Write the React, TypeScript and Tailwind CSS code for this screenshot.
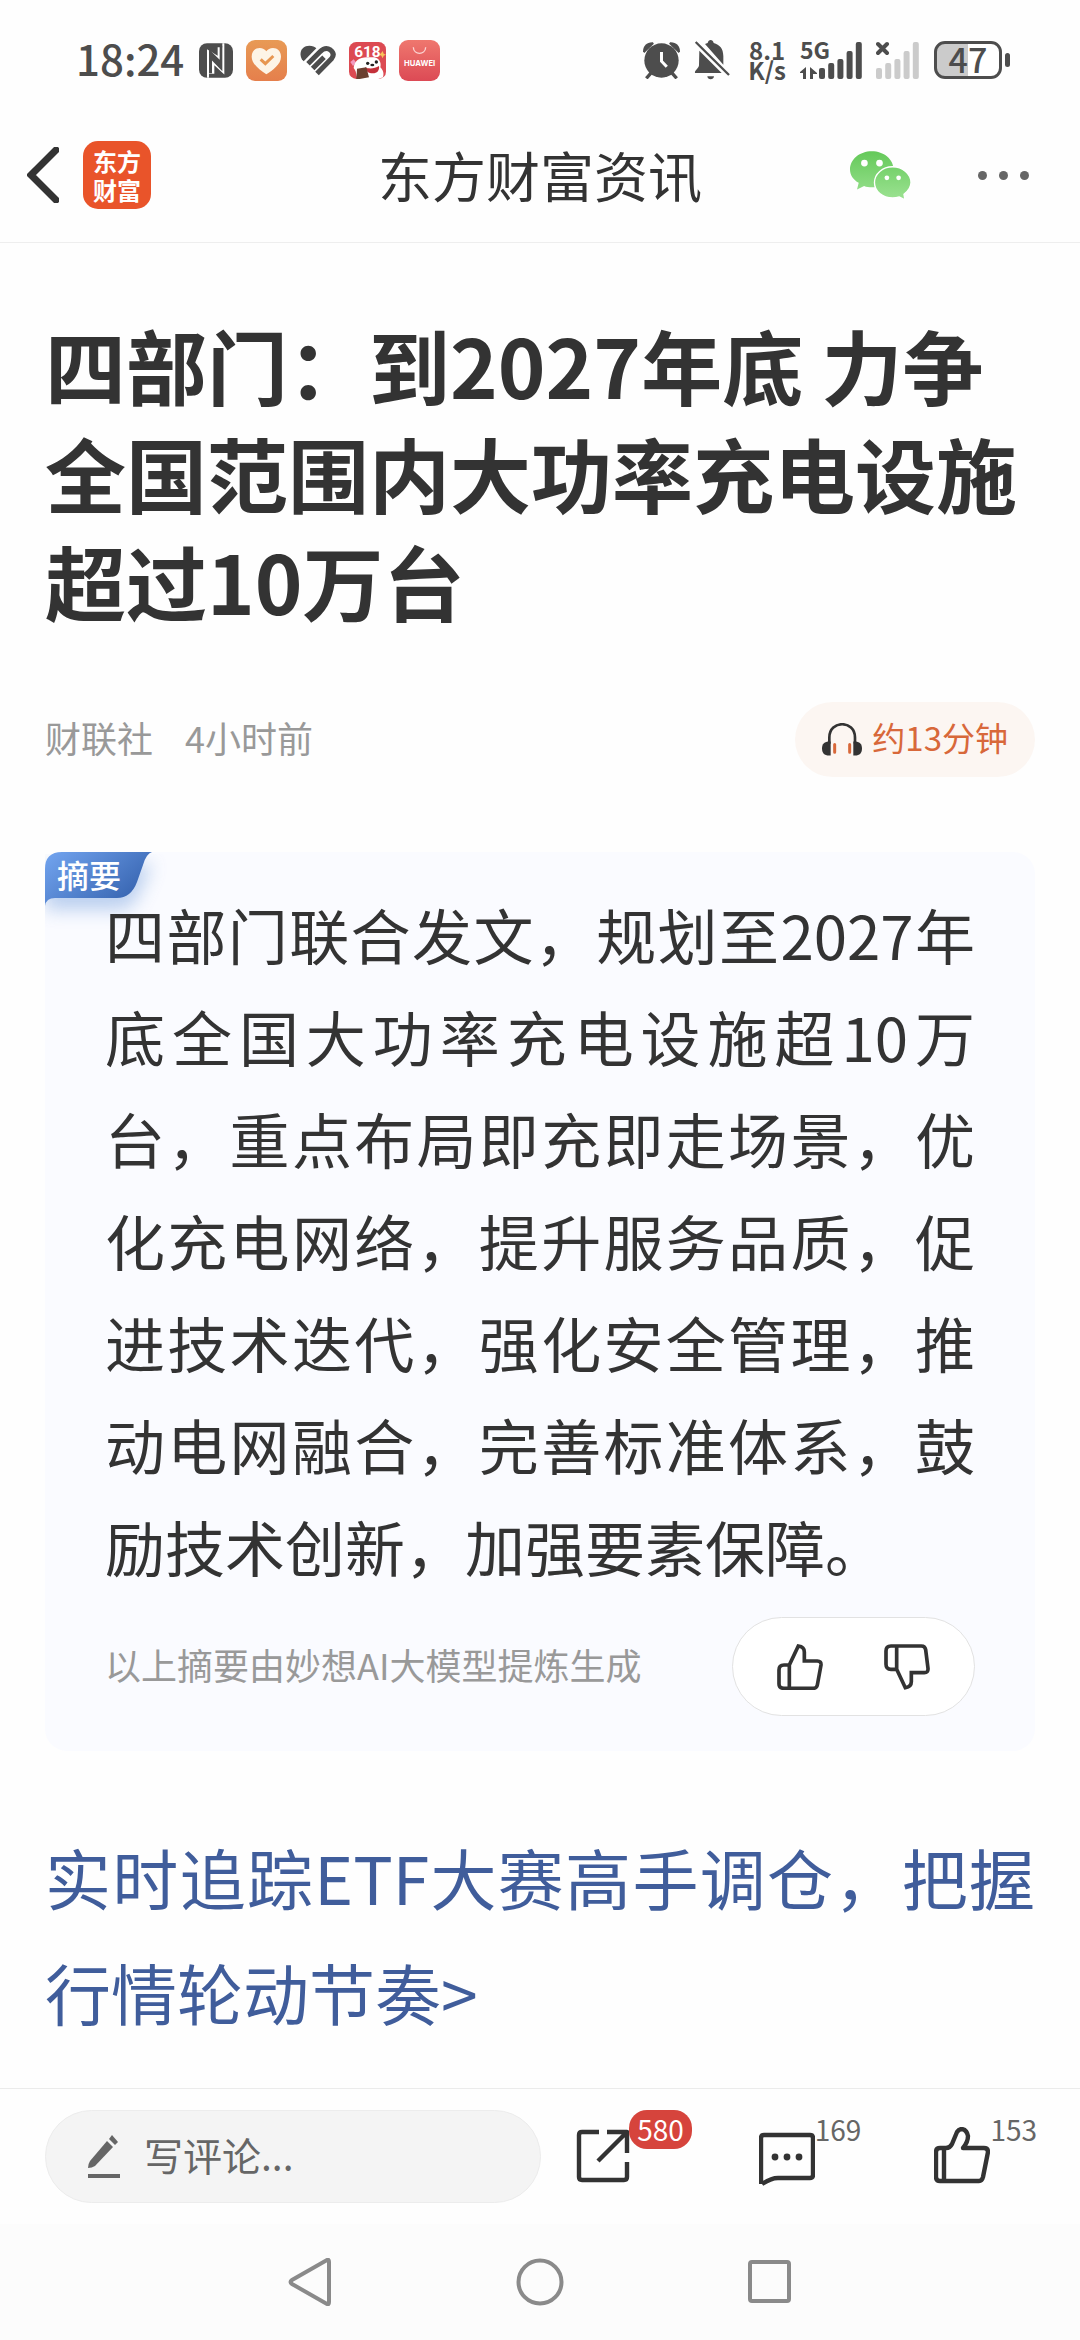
import { useState } from 'react';

import type { ReactNode } from 'react';

const SUMMARY =
	'四部门联合发文，规划至2027年底全国大功率充电设施超10万台，重点布局即充即走场景，优化充电网络，提升服务品质，促进技术迭代，强化安全管理，推动电网融合，完善标准体系，鼓励技术创新，加强要素保障。';

const SIGNAL_BARS = [11, 16, 20, 28, 37];

function NfcIcon() {
	return (
		<svg viewBox="0 0 102 104" className="h-[35px] w-[34px]" aria-hidden="true">
			<rect width="102" height="104" rx="24" fill="#4d4d4d" />
			<path d="M24 18V104H30V92H46V66L76 94V86V0H70V12H56V38Z" fill="#fff" />
			<path d="M30 98V16L71 88V6" fill="none" stroke="#4d4d4d" strokeWidth="0" />
			<path d="M30 34V90H39V52L70 84V10H62V50L30 18Z" fill="#4d4d4d" />
		</svg>
	);
}

function HeartAppIcon() {
	return (
		<svg viewBox="0 0 123 123" className="size-[41px]" aria-hidden="true">
			<defs>
				<linearGradient id="heart-app" x1="0" y1="0" x2="0" y2="1">
					<stop offset="0" stopColor="#e89a55" />
					<stop offset="1" stopColor="#e57f4c" />
				</linearGradient>
			</defs>
			<rect width="123" height="123" rx="27" fill="url(#heart-app)" />
			<path
				d="M61 103C42 90 17 73 17 50C17 33 28 24 41 24C50 24 57 28 61 34C65 28 72 24 81 24C94 24 105 33 105 50C105 73 80 90 61 103Z"
				fill="#fdf4e6"
			/>
			<path d="M44 58L58 71L82 48" fill="none" stroke="#e79650" strokeWidth="9" />
		</svg>
	);
}

function HealthIcon() {
	return (
		<svg viewBox="0 0 108 92" className="h-[31px] w-[36px]" aria-hidden="true">
			<g fill="none" stroke="#4d4d4d" strokeWidth="15">
				<path d="M24 56L60 20Q76 4 91 14Q106 26 95 40L51 85" />
				<path d="M38 70L72 36" />
			</g>
			<path d="M6 43C-6 20 8 2 28 2C38 2 44 5 49 9L11 48Z" fill="#4d4d4d" />
		</svg>
	);
}

function SaleIcon() {
	return (
		<svg viewBox="0 0 111 111" className="size-[37px]" aria-hidden="true">
			<rect width="111" height="111" rx="22" fill="#dc4a52" />
			<path d="M4 60L14 52L22 62L12 72Z" fill="#f29bc0" />
			<path d="M96 34L101 27L104 35L111 38L104 41L101 49L97 41L91 38Z" fill="#f8c35a" />
			<path
				d="M14 78C16 58 30 46 54 46H76C90 48 98 62 94 76C102 84 106 94 102 106L88 111H30C18 104 26 92 14 78Z"
				fill="#fff"
			/>
			<path d="M48 76C60 82 78 80 90 72C92 86 84 94 72 94C58 94 50 88 48 76Z" fill="#c4303a" />
			<circle cx="56" cy="64" r="5" fill="#222" />
			<circle cx="82" cy="60" r="5" fill="#222" />
			<ellipse cx="70" cy="69" rx="6" ry="4" fill="#222" />
			<path d="M24 80L52 76L60 106L32 111H22Z" fill="#6b4030" />
			<text x="55" y="46" textAnchor="middle" fontSize="46" fontWeight="700" fontFamily="Roboto, sans-serif" fill="#fff">
				618
			</text>
		</svg>
	);
}

function HuaweiIcon() {
	return (
		<svg viewBox="0 0 123 123" className="size-[41px]" aria-hidden="true">
			<defs>
				<linearGradient id="huawei-app" x1="0" y1="0" x2="0" y2="1">
					<stop offset="0" stopColor="#ef776e" />
					<stop offset="1" stopColor="#dc4a55" />
				</linearGradient>
			</defs>
			<rect width="123" height="123" rx="27" fill="url(#huawei-app)" />
			<path d="M43 22C44 46 79 46 80 22" fill="none" stroke="#fbd5d3" strokeWidth="4" />
			<text x="62" y="79" textAnchor="middle" fontSize="23" fontWeight="700" fontFamily="Inter, sans-serif" fill="#fff">
				HUAWEI
			</text>
		</svg>
	);
}

function AlarmIcon() {
	return (
		<svg viewBox="0 0 112 112" className="size-[37px]" aria-hidden="true">
			<path d="M24 94L10 110M88 94L102 110" stroke="#4d4d4d" strokeWidth="10" />
			<path d="M0 29C0 12 12 0 30 1L33 5L4 33Z" fill="#4d4d4d" />
			<path d="M112 29C112 12 100 0 82 1L79 5L108 33Z" fill="#4d4d4d" />
			<circle cx="56" cy="56" r="52" fill="#4d4d4d" />
			<path d="M56 30V58L72 75" fill="none" stroke="#fff" strokeWidth="9" />
		</svg>
	);
}

function BellOffIcon() {
	return (
		<svg viewBox="0 0 106 120" className="h-[40px] w-[36px]" aria-hidden="true">
			<g fill="#4d4d4d">
				<path d="M32 12L40 9C42 -3 56 -3 58 9C76 14 87 26 87 48V74Z" />
				<path d="M15 32L82 99H2C0 92 14 84 14 76Z" />
				<path d="M39 109H59C59 121 39 121 39 109Z" />
			</g>
			<path d="M4 6L104 105" stroke="#4d4d4d" strokeWidth="7" />
		</svg>
	);
}

function SignalBars({ color }: { color: string }) {
	return (
		<g fill={color}>
			{SIGNAL_BARS.map((height, index) => (
				<rect key={height} x={index * 9.2} y={38 - height} width="6" height={height} rx="2" />
			))}
		</g>
	);
}

function StatusBar() {
	return (
		<div className="flex h-[120px] items-center justify-between pr-[70px] pl-[76px] text-[#4d4d4d]">
			<div className="flex items-center gap-[13px]">
				<time className="pr-[2px] pb-1 text-[42px] leading-none font-medium">18:24</time>
				<NfcIcon />
				<HeartAppIcon />
				<HealthIcon />
				<SaleIcon />
				<HuaweiIcon />
			</div>
			<div className="flex items-center gap-[14px]">
				<AlarmIcon />
				<BellOffIcon />
				<div className="ml-1 text-center text-[24px] leading-[20px] font-bold">
					<div>8.1</div>
					<div>K/s</div>
				</div>
				<svg viewBox="0 0 62 38" className="h-[38px] w-[62px] overflow-visible" role="img" aria-label="5G signal">
					<text x="0" y="18" fontSize="23" fontWeight="700" fill="#4d4d4d" fontFamily="Noto Sans CJK SC, sans-serif">
						5G
					</text>
					<path d="M0 31L6 26V38H3V32H0ZM10 26L17 32V33H13V38H10Z" fill="#4d4d4d" />
					<g transform="translate(19 0)">
						<SignalBars color="#4d4d4d" />
					</g>
				</svg>
				<svg viewBox="0 0 44 38" className="h-[38px] w-[44px]" role="img" aria-label="No signal">
					<path d="M2 3L11 12M11 3L2 12" stroke="#4d4d4d" strokeWidth="4" strokeLinecap="round" />
					<SignalBars color="#cbcbcb" />
				</svg>
				<div className="flex items-center gap-[3px]">
					<div className="flex h-[38px] w-[68px] items-center justify-center rounded-[11px] border-[3px] border-[#4d4d4d] bg-linear-to-r from-[#cbcbcb] from-50% to-white to-50% pb-[2px] text-[34px] leading-none font-medium">
						47
					</div>
					<div className="h-[14px] w-[5px] rounded-sm bg-[#4d4d4d]" />
				</div>
			</div>
		</div>
	);
}

function WechatIcon() {
	return (
		<svg viewBox="0 0 182 146" className="h-[49px] w-[61px]" aria-hidden="true">
			<defs>
				<linearGradient id="wechat" gradientUnits="userSpaceOnUse" x1="0" y1="0" x2="0" y2="146">
					<stop offset="0" stopColor="#64c959" />
					<stop offset="1" stopColor="#9ce292" />
				</linearGradient>
			</defs>
			<path
				d="M65 1C101 1 130 25 130 55C130 85 101 108 65 108C57 108 49 107 42 104L21 115L26 95C10 86 0 72 0 55C0 25 29 1 65 1Z"
				fill="url(#wechat)"
			/>
			<path
				d="M127 47C97 47 73 68 73 94C73 120 97 140 127 140C134 140 141 139 147 137L164 146L161 129C173 120 182 108 182 94C182 68 157 47 127 47Z"
				fill="url(#wechat)"
				stroke="#fff"
				strokeWidth="4"
			/>
			<g fill="#fff">
				<circle cx="43" cy="36" r="10" />
				<circle cx="88" cy="36" r="10" />
				<circle cx="110" cy="80" r="7" />
				<circle cx="145" cy="80" r="7" />
			</g>
		</svg>
	);
}

function Header() {
	return (
		<header className="grid h-[123px] grid-cols-[1fr_auto_1fr] items-center border-b border-[#eeeeee] px-[27px] pb-3">
			<div className="flex items-center gap-6">
				<button type="button" aria-label="返回">
					<svg viewBox="0 0 32 56" className="h-[56px] w-[32px]" aria-hidden="true">
						<path d="M29 3L4 28L29 53" fill="none" stroke="#333" strokeWidth="7" strokeLinecap="round" />
					</svg>
				</button>
				<a
					href="#home"
					className="flex size-[68px] items-center justify-center rounded-[15px] bg-[#e9542a] text-center text-[24px] leading-[29px] font-bold text-white"
				>
					东方
					<br />
					财富
				</a>
			</div>
			<div className="text-[54px] leading-[60px]">东方财富资讯</div>
			<div className="flex items-center justify-end gap-[67px] pr-6">
				<button type="button" aria-label="微信">
					<WechatIcon />
				</button>
				<button type="button" aria-label="更多" className="flex gap-3">
					<span className="size-[9px] rounded-full bg-[#666]" />
					<span className="size-[9px] rounded-full bg-[#666]" />
					<span className="size-[9px] rounded-full bg-[#666]" />
				</button>
			</div>
		</header>
	);
}

function SummaryTag() {
	return (
		<div className="absolute top-0 left-0">
			<svg viewBox="0 0 140 90" className="h-[90px] w-[140px]" aria-hidden="true">
				<defs>
					<linearGradient id="tag" x1="0" y1="0" x2="1" y2="0.6">
						<stop offset="0" stopColor="#73a5f0" />
						<stop offset="1" stopColor="#3764b0" />
					</linearGradient>
					<filter id="tag-shadow" x="-20%" y="-20%" width="160%" height="200%">
						<feGaussianBlur stdDeviation="9" />
					</filter>
				</defs>
				<path d="M0 12H107L92 46Q86 58 73 58H0Z" fill="#5d8fd8" opacity="0.4" filter="url(#tag-shadow)" />
				<path d="M0 54V17Q0 0 17 0H107Q101 2 98 13L92 30Q86 46 72 46H10Q1 46 0 54Z" fill="url(#tag)" />
			</svg>
			<span className="absolute top-1 left-3 text-[32px] leading-9 font-medium whitespace-nowrap text-white">摘要</span>
		</div>
	);
}

function SummaryCard() {
	const [vote, setVote] = useState<'up' | 'down' | undefined>();

	return (
		<section className="relative mt-[75px] rounded-[22px] bg-[#fafbff] px-[60px] pt-[31px] pb-[35px]">
			<SummaryTag />
			<p className="relative text-justify text-[60px] leading-[102px]">{SUMMARY}</p>
			<div className="mt-5 flex items-center justify-between">
				<span className="pb-[6px] text-[36px] leading-[48px] text-[#999]">以上摘要由妙想AI大模型提炼生成</span>
				<div className="flex h-[99px] w-[243px] items-center justify-between rounded-full border border-[#e2e2e2] bg-white px-11">
					<button type="button" aria-label="赞同" aria-pressed={vote === 'up'} onClick={() => setVote('up')}>
						<svg viewBox="0 0 138 138" className="size-[46px]" aria-hidden="true">
							<path
								d="M37 63H21Q6 63 6 78V120Q6 133 21 133H109Q119 133 121 123L132 63Q133 51 121 51H82V24Q82 8 64 6L37 63V133"
								fill="none"
								stroke="#333"
								strokeWidth="11"
							/>
						</svg>
					</button>
					<button type="button" aria-label="反对" aria-pressed={vote === 'down'} onClick={() => setVote('down')}>
						<svg viewBox="0 0 138 138" className="size-[46px]" aria-hidden="true">
							<path
								d="M38 6V76H21Q6 76 6 61V21Q6 6 21 6H112Q123 6 125 17L132 73Q133 86 121 86H82V113Q82 128 64 131L38 76"
								fill="none"
								stroke="#333"
								strokeWidth="11"
							/>
						</svg>
					</button>
				</div>
			</div>
		</section>
	);
}

function Article() {
	return (
		<main className="flex-1 px-[45px] pt-[67px]">
			<h1 className="text-[81px] leading-[108px] font-bold">四部门：到2027年底 力争全国范围内大功率充电设施超过10万台</h1>
			<div className="mt-[68px] flex items-center justify-between">
				<div className="flex gap-8 pb-[6px] text-[36px] leading-[48px] text-[#999]">
					<span>财联社</span>
					<span>4小时前</span>
				</div>
				<button
					type="button"
					className="flex h-[75px] items-center gap-[10px] rounded-full bg-[#fcf6f2] px-[27px] text-[33px] leading-[48px] text-[#d8683a]"
				>
					<svg viewBox="0 0 120 98" className="h-[33px] w-[40px]" aria-hidden="true">
						<path d="M22 62V43C22 -10 99 -10 99 43V62" fill="none" stroke="#333" strokeWidth="8" />
						<path d="M26 55V97C8 99 0 90 0 76C0 62 8 54 26 55Z" fill="#333" />
						<path d="M94 55V97C112 99 120 90 120 76C120 62 112 54 94 55Z" fill="#333" />
						<path d="M38 64V87M83 64V87" stroke="#d8683a" strokeWidth="9" strokeLinecap="round" />
					</svg>
					<span className="pb-[6px]">约13分钟</span>
				</button>
			</div>
			<SummaryCard />
			<a href="#etf" className="mt-[68px] block text-justify text-[66px] leading-[115px] text-[#405d9b]">
				实时追踪ETF大赛高手调仓，把握行情轮动节奏&gt;
			</a>
		</main>
	);
}

function ToolbarIcon({ children }: { children: ReactNode }) {
	return (
		<svg
			viewBox="0 0 56 60"
			className="mt-[17px] h-[60px] w-[56px]"
			fill="none"
			stroke="#333"
			strokeWidth="4.4"
			strokeLinejoin="round"
			aria-hidden="true"
		>
			{children}
		</svg>
	);
}

function CommentBar() {
	return (
		<div className="flex items-start gap-[67px] border-t border-[#ebebeb] px-[45px] pt-[21px] pb-[21px]">
			<label className="-mr-8 flex h-[93px] min-w-0 flex-1 items-center gap-6 rounded-full border border-[#ececec] bg-[#f4f4f4] px-[42px]">
				<svg viewBox="0 0 32 44" className="h-[44px] w-[32px] shrink-0" aria-hidden="true">
					<g fill="#666">
						<path d="M19 6L25 12L7 31Q4 33 0 33Q0 29 2 26Z" />
						<path d="M21 4L24 0L30 7L27 10Z" />
						<rect y="39" width="32" height="4" />
					</g>
				</svg>
				<input
					type="text"
					aria-label="写评论"
					placeholder="写评论..."
					className="min-w-0 flex-1 bg-transparent pb-[6px] text-[39px] leading-[48px] outline-none placeholder:text-[#666]"
				/>
			</label>
			<button type="button" aria-label="分享" className="flex items-start">
				<ToolbarIcon>
					<path d="M23 5H6Q3 5 3 8V50Q3 53 6 53H48Q51 53 51 50V35" />
					<path d="M31 5H51V26M22 34L50 6" />
				</ToolbarIcon>
				<span className="-ml-[3px] rounded-[18px] bg-[#d6443c] px-2 text-[28px] leading-[39px] text-white">580</span>
			</button>
			<button type="button" aria-label="评论" className="flex items-start pr-[6px]">
				<ToolbarIcon>
					<path d="M2 57V11Q2 8 5 8H51Q54 8 54 11V48Q54 51 51 51H19Q12 51 3 57" />
					<g fill="#333" stroke="none">
						<circle cx="16" cy="30" r="3.4" />
						<circle cx="28" cy="30" r="3.4" />
						<circle cx="40" cy="30" r="3.4" />
					</g>
				</ToolbarIcon>
				<span className="text-[28px] leading-[39px] text-[#666]">169</span>
			</button>
			<button type="button" aria-label="点赞" className="-mr-[2px] flex items-start">
				<ToolbarIcon>
					<path d="M10 21H6Q2 21 2 25V50Q2 54 6 54H45Q48 54 49 50L54 25Q54 21 50 21H29Q34 15 34 9Q33 3 28 2Q25 2 23 5L18 17Q16 21 12 21H10V54" />
				</ToolbarIcon>
				<span className="text-[28px] leading-[39px] text-[#666]">153</span>
			</button>
		</div>
	);
}

function SystemNav() {
	return (
		<nav className="flex h-[116px] items-center justify-center gap-[182px] bg-[#fcfcfc]">
			<button type="button" aria-label="Back">
				<svg viewBox="0 0 48 48" className="size-12" fill="none" stroke="#8a8a8a" strokeWidth="4" aria-hidden="true">
					<path d="M41 2Q43 1 43 4V44Q43 47 41 46L6 26Q3 24 6 22Z" />
				</svg>
			</button>
			<button type="button" aria-label="Home">
				<svg viewBox="0 0 48 48" className="size-12" fill="none" stroke="#8a8a8a" strokeWidth="4" aria-hidden="true">
					<circle cx="24" cy="24" r="21.5" />
				</svg>
			</button>
			<button type="button" aria-label="Recent apps">
				<svg viewBox="0 0 48 48" className="size-12" fill="none" stroke="#8a8a8a" strokeWidth="4" aria-hidden="true">
					<rect x="4" y="4" width="39" height="39" rx="2" />
				</svg>
			</button>
		</nav>
	);
}

export default function App() {
	return (
		<div lang="zh-CN" className="flex min-h-screen flex-col bg-[#fefefe] font-['Noto_Sans_CJK_SC',sans-serif] text-[#333]">
			<StatusBar />
			<Header />
			<Article />
			<CommentBar />
			<SystemNav />
		</div>
	);
}
